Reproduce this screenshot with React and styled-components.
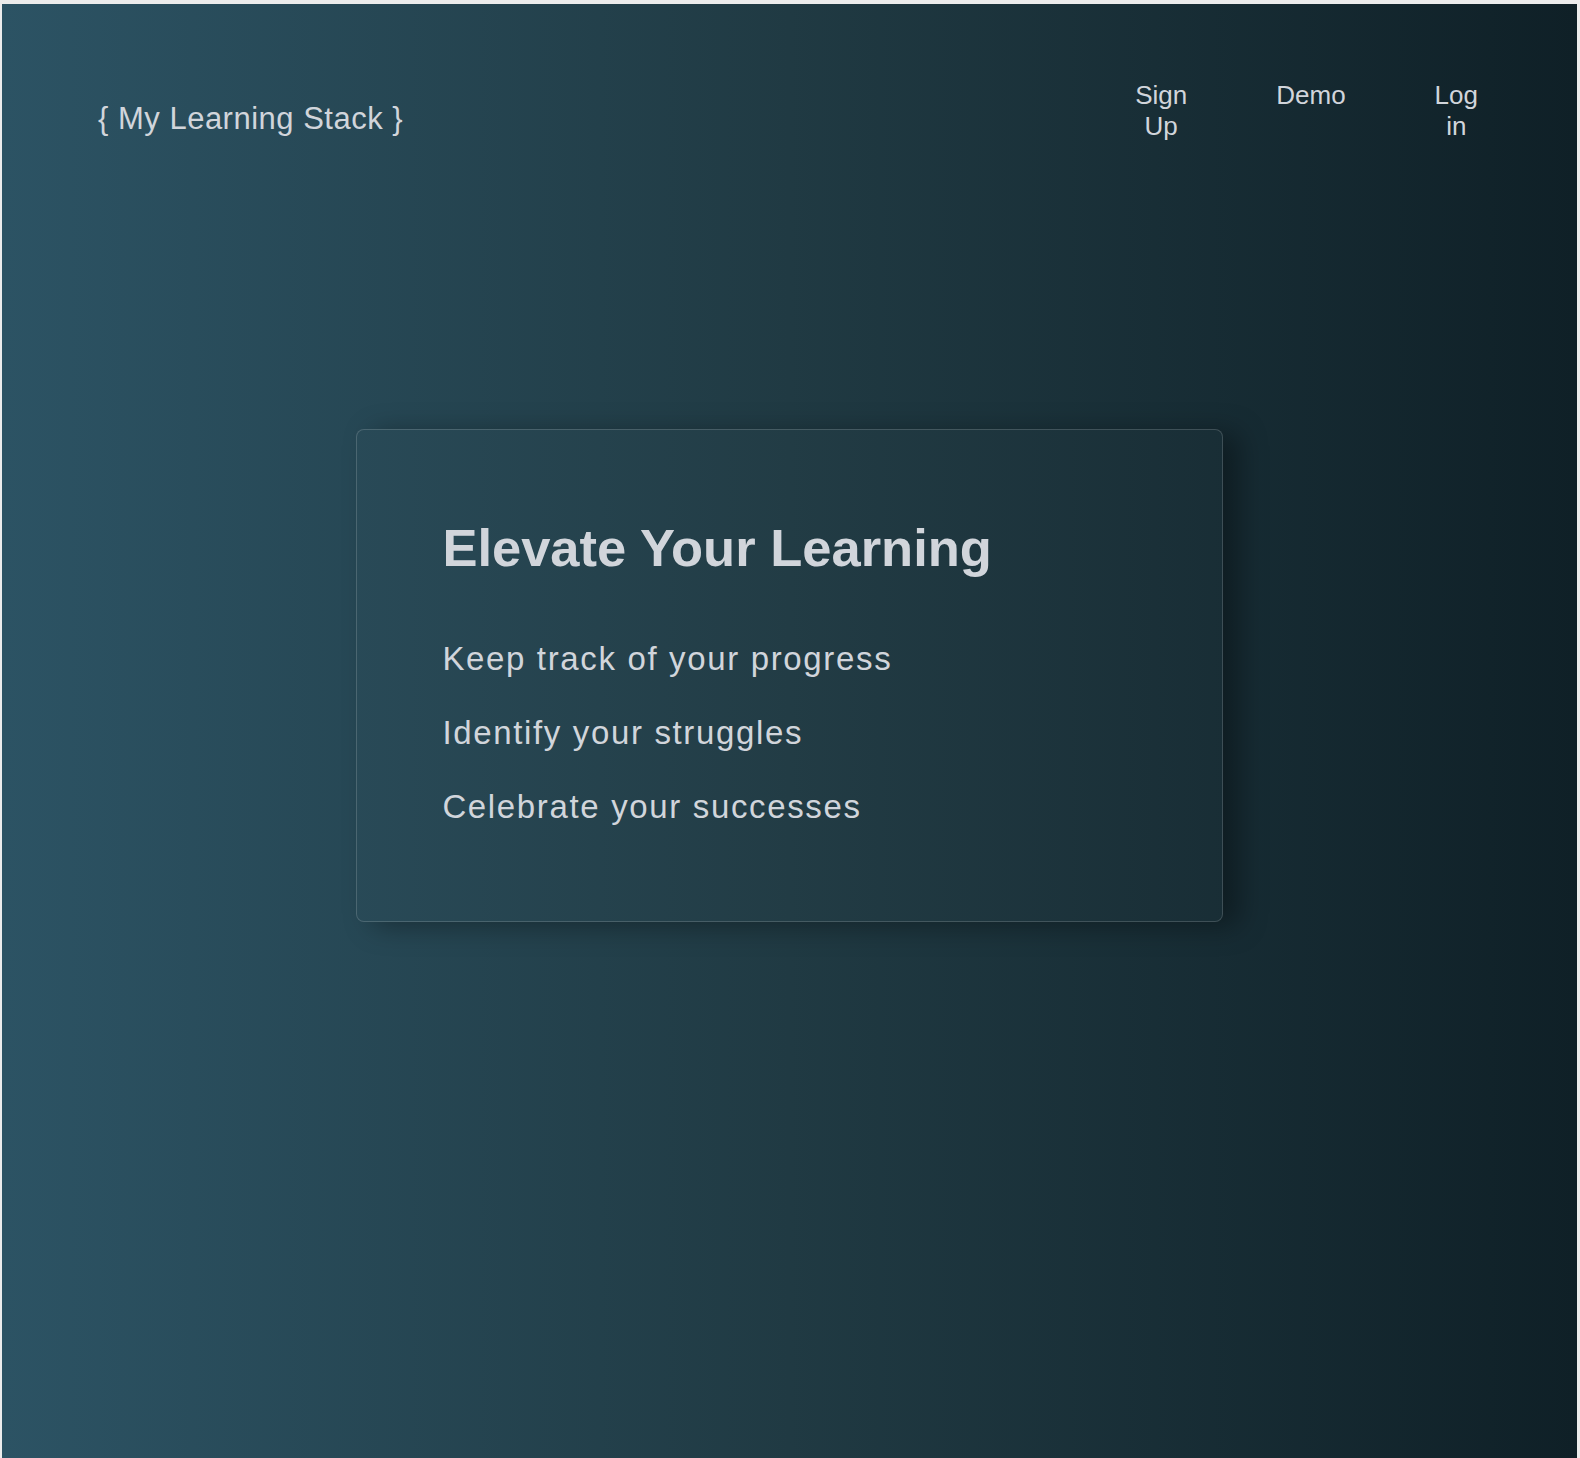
import React from "react";
import styled, { createGlobalStyle } from "styled-components";

const GlobalStyle = createGlobalStyle`
    html, body {
        margin:0;
        padding:0;
        background:#ececec;
    }
    body {
        font-family:"Liberation Sans", Arial, Helvetica, sans-serif;
    }
`;

const Frame = styled.div`
    padding:4px 3px 0 2px;
`;

const Page = styled.div`
    min-height:calc(100vh - 4px);
    background:linear-gradient(to right, #2c5364, #203a43 50%, #0f2027);
    color:#d1d5db;
    display:flex;
    flex-direction:column;
`;

const Header = styled.header`
    display:flex;
    justify-content:space-between;
    align-items:flex-start;
    padding:76px 99px 0 96px;
`;

const Logo = styled.div`
    font-size:31px;
    letter-spacing:0.5px;
    padding-top:21px;
`;

const Nav = styled.nav`
    display:flex;
    gap:89px;
`;

const NavLink = styled.a`
    width:min-content;
    text-align:center;
    font-size:26px;
    line-height:31px;
    color:#d1d5db;
    text-decoration:none;
    cursor:pointer;
`;

const Hero = styled.main`
    display:flex;
    justify-content:center;
    padding-top:287px;
`;

const Card = styled.section`
    width:55%;
    box-sizing:border-box;
    padding:87px 85px 96px;
    border:1px solid rgba(255,255,255,0.16);
    border-radius:8px;
    background:rgba(255,255,255,0.01);
    box-shadow:16px 4px 28px rgba(0,0,0,0.35);
`;

const Title = styled.h1`
    margin:0 0 62px;
    font-size:52.5px;
    font-weight:700;
`;

const Points = styled.ul`
    list-style:none;
    margin:0;
    padding:0;
    display:flex;
    flex-direction:column;
    gap:37px;
`;

const Point = styled.li`
    font-size:33px;
    line-height:37px;
    letter-spacing:1.65px;
`;

export default function App() {
    return (
        <Frame>
            <GlobalStyle />
            <Page>
                <Header>
                    <Logo>{"{ My Learning Stack }"}</Logo>
                    <Nav>
                        <NavLink>Sign Up</NavLink>
                        <NavLink>Demo</NavLink>
                        <NavLink>Log in</NavLink>
                    </Nav>
                </Header>
                <Hero>
                    <Card>
                        <Title>Elevate Your Learning</Title>
                        <Points>
                            <Point>Keep track of your progress</Point>
                            <Point>Identify your struggles</Point>
                            <Point>Celebrate your successes</Point>
                        </Points>
                    </Card>
                </Hero>
            </Page>
        </Frame>
    );
}
